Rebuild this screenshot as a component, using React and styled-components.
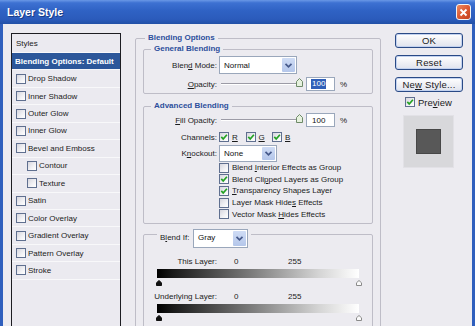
import React from "react";
import styled, { createGlobalStyle } from "styled-components";

const GlobalStyle = createGlobalStyle`
  html, body { margin: 0; padding: 0; background: #ECEBF0; }
  body { font-family: "Liberation Sans", Arial, sans-serif; color: #1b1b1b; }
`;

const styleItems = [
  { label: "Drop Shadow" },
  { label: "Inner Shadow" },
  { label: "Outer Glow" },
  { label: "Inner Glow" },
  { label: "Bevel and Emboss" },
  { label: "Contour", indent: true },
  { label: "Texture", indent: true },
  { label: "Satin" },
  { label: "Color Overlay" },
  { label: "Gradient Overlay" },
  { label: "Pattern Overlay" },
  { label: "Stroke" },
];

const advancedOptions = [
  { pre: "Blend ", key: "I", post: "nterior Effects as Group", checked: false },
  { pre: "Blend Cli", key: "p", post: "ped Layers as Group", checked: true },
  { pre: "", key: "T", post: "ransparency Shapes Layer", checked: true },
  { pre: "Layer Mask Hide", key: "s", post: " Effects", checked: false },
  { pre: "Vector Mask ", key: "H", post: "ides Effects", checked: false },
];

function CheckMark() {
  return (
    <svg width="8" height="8" viewBox="0 0 8 8">
      <polyline points="1.3,3.9 3.2,6 6.9,1.7" fill="none" stroke="#23A223" strokeWidth="1.7" />
    </svg>
  );
}

function Check({ checked }) {
  return <CheckBox>{checked && <CheckMark />}</CheckBox>;
}

function Chevron() {
  return (
    <svg width="9" height="7" viewBox="0 0 9 7">
      <polyline points="1.5,1.8 4.5,4.8 7.5,1.8" fill="none" stroke="#46598A" strokeWidth="1.7" />
    </svg>
  );
}

function Select({ value, width, height }) {
  return (
    <Combo $w={width} $h={height}>
      <ComboText>{value}</ComboText>
      <ComboArrow>
        <Chevron />
      </ComboArrow>
    </Combo>
  );
}

function Slider() {
  return (
    <SliderWrap>
      <Track />
      <Thumb>
        <svg width="7" height="9" viewBox="0 0 7 9">
          <path d="M0.5,8.5 L0.5,3.5 L3.5,0.5 L6.5,3.5 L6.5,8.5 Z" fill="#E6F1DE" stroke="#6E8A68" strokeWidth="1" />
        </svg>
      </Thumb>
    </SliderWrap>
  );
}

function RangeThumb({ dark }) {
  return (
    <svg width="6" height="6" viewBox="0 0 6 6">
      <path
        d="M0.5,5.5 L0.5,2.8 L3,0.5 L5.5,2.8 L5.5,5.5 Z"
        fill={dark ? "#111" : "#fafafa"}
        stroke={dark ? "#111" : "#8a8a8a"}
        strokeWidth="1"
      />
    </svg>
  );
}

function BlendRange({ label, mt }) {
  return (
    <>
      <ValueRow $mt={mt}>
        <Label>{label}</Label>
        <MinValue>0</MinValue>
        <span>255</span>
      </ValueRow>
      <GrayBar />
      <ThumbRow>
        <RangeThumb dark />
        <RangeThumb />
      </ThumbRow>
    </>
  );
}

export default function App() {
  return (
    <>
      <GlobalStyle />
      <Window>
        <TitleBar>
          <Title>Layer Style</Title>
          <CloseButton>
            <svg width="9" height="9" viewBox="0 0 9 9">
              <path d="M1.5,1.5 L7.5,7.5 M7.5,1.5 L1.5,7.5" stroke="#fff" strokeWidth="1.8" />
            </svg>
          </CloseButton>
        </TitleBar>

        <Frame>
          <StylesPanel>
            <PanelHeader>Styles</PanelHeader>
            <StyleRow $active>Blending Options: Default</StyleRow>
            {styleItems.map((item) => (
              <StyleRow key={item.label} $indent={item.indent}>
                <Check />
                <span>{item.label}</span>
              </StyleRow>
            ))}
          </StylesPanel>

          <Main>
            <Group $h={300}>
              <Legend $ml={2}>Blending Options</Legend>

              <Group $mt={1}>
                <Legend $ml={7}>General Blending</Legend>
                <FieldRow $h={18} $mt={2}>
                  <Label>
                    Blen<u>d</u> Mode:
                  </Label>
                  <Controls>
                    <Select value="Normal" width={78} height={18} />
                  </Controls>
                </FieldRow>
                <FieldRow $h={14} $mt={3}>
                  <Label>
                    <u>O</u>pacity:
                  </Label>
                  <Controls>
                    <Slider />
                    <NumberBox>
                      <Selected>100</Selected>
                    </NumberBox>
                    <Percent>%</Percent>
                  </Controls>
                </FieldRow>
                <Spacer $h={2} />
              </Group>

              <Group $mt={7}>
                <Legend $ml={7}>Advanced Blending</Legend>
                <FieldRow $h={14} $mt={2}>
                  <Label>
                    <u>F</u>ill Opacity:
                  </Label>
                  <Controls>
                    <Slider />
                    <NumberBox>100</NumberBox>
                    <Percent>%</Percent>
                  </Controls>
                </FieldRow>
                <FieldRow $h={10} $mt={5}>
                  <Label>Channels:</Label>
                  <Controls>
                    {["R", "G", "B"].map((c) => (
                      <Channel key={c}>
                        <Check checked />
                        <u>{c}</u>
                      </Channel>
                    ))}
                  </Controls>
                </FieldRow>
                <FieldRow $h={17} $mt={3}>
                  <Label>
                    K<u>n</u>ockout:
                  </Label>
                  <Controls>
                    <Select value="None" width={58} height={17} />
                  </Controls>
                </FieldRow>
                <CheckList>
                  {advancedOptions.map((o) => (
                    <CheckRow key={o.post}>
                      <Check checked={o.checked} />
                      <span>
                        {o.pre}
                        <u>{o.key}</u>
                        {o.post}
                      </span>
                    </CheckRow>
                  ))}
                </CheckList>
                <Spacer $h={3} />
              </Group>

              <Group $mt={5} $h={120}>
                <Legend $ml={13}>
                  <LegendInner>
                    <BlendIfLabel>
                      B<u>l</u>end If:
                    </BlendIfLabel>
                    <Select value="Gray" width={55} height={19} />
                  </LegendInner>
                </Legend>
                <BlendRange label="This Layer:" mt={16} />
                <BlendRange label="Underlying Layer:" mt={6} />
              </Group>
            </Group>
          </Main>

          <Side>
            <Button>OK</Button>
            <Button>Reset</Button>
            <Button>
              <span>
                Ne<u>w</u> Style...
              </span>
            </Button>
            <PreviewRow>
              <Check checked />
              <span>
                Pre<u>v</u>iew
              </span>
            </PreviewRow>
            <PreviewBox>
              <PreviewSwatch />
            </PreviewBox>
          </Side>
        </Frame>
      </Window>
    </>
  );
}

const Window = styled.div`
  width: 475px;
  height: 326px;
  overflow: hidden;
  background: #ecebf0;
`;

const TitleBar = styled.div`
  height: 24px;
  box-sizing: border-box;
  display: flex;
  align-items: center;
  justify-content: space-between;
  padding: 0 4px 0 7px;
  background: linear-gradient(
    #6a98e6 0%,
    #3d71d2 12%,
    #2f62c4 45%,
    #2b5bbb 80%,
    #2150a6 100%
  );
`;

const Title = styled.span`
  color: #fff;
  font-weight: bold;
  font-size: 10.5px;
  text-shadow: 1px 1px 0 #1a3d86;
`;

const CloseButton = styled.div`
  width: 15px;
  height: 16px;
  box-sizing: border-box;
  border: 1px solid #f4f4f4;
  border-radius: 3px;
  background: linear-gradient(135deg, #ec8a62 0%, #dc5a33 50%, #c4401d 100%);
  display: flex;
  align-items: center;
  justify-content: center;
`;

const Frame = styled.div`
  height: 302px;
  box-sizing: border-box;
  display: flex;
  align-items: flex-start;
  padding: 9px 0 0 8px;
  border-left: 3px solid #2f5fbd;
  border-right: 3px solid #2f5fbd;
  font-size: 8px;
`;

const StylesPanel = styled.div`
  flex: none;
  width: 110px;
  height: 320px;
  box-sizing: border-box;
  border: 1px solid #1d1d22;
  border-bottom: none;
  background: #ebeaf0;
`;

const PanelHeader = styled.div`
  height: 19px;
  box-sizing: border-box;
  border-bottom: 1px solid #f8f8fa;
  padding-left: 4px;
  display: flex;
  align-items: center;
`;

const StyleRow = styled.div`
  height: 17.45px;
  box-sizing: border-box;
  display: flex;
  align-items: center;
  gap: 2px;
  white-space: nowrap;
  border-bottom: 1px solid #f8f8fa;
  padding-left: ${(p) => (p.$active ? 3 : p.$indent ? 15 : 4)}px;
  background: ${(p) => (p.$active ? "#2c579a" : "transparent")};
  color: ${(p) => (p.$active ? "#fff" : "#1b1b1b")};
  font-weight: ${(p) => (p.$active ? "bold" : "normal")};
`;

const CheckBox = styled.span`
  flex: none;
  width: 10px;
  height: 10px;
  box-sizing: border-box;
  border: 1px solid #5f6f8f;
  background: linear-gradient(135deg, #d6d6de 0%, #f2f2f5 60%, #ffffff 100%);
  display: inline-flex;
  align-items: center;
  justify-content: center;
`;

const Main = styled.div`
  flex: none;
  width: 246px;
  margin-left: 14px;
`;

const Group = styled.fieldset`
  margin: ${(p) => p.$mt || 0}px 0 0;
  padding: ${(p) => (p.$h === 300 ? "0 7px" : "0")};
  border: 1px solid #bebdc7;
  border-radius: 2px;
  min-width: 0;
  box-sizing: border-box;
  ${(p) => (p.$h ? `height: ${p.$h}px;` : "")}
`;

const Legend = styled.legend`
  padding: 0 3px;
  margin-left: ${(p) => p.$ml}px;
  font-weight: bold;
  font-size: 8px;
  line-height: 10px;
  color: #2c4f9c;
`;

const LegendInner = styled.div`
  display: flex;
  align-items: center;
  height: 19px;
  margin-bottom: -7px;
  margin-top: 0;
  font-weight: normal;
  color: #1b1b1b;
`;

const BlendIfLabel = styled.span`
  width: 33px;
`;

const FieldRow = styled.div`
  display: grid;
  grid-template-columns: 73px auto;
  column-gap: 2px;
  align-items: center;
  height: ${(p) => p.$h}px;
  margin-top: ${(p) => p.$mt}px;
`;

const Label = styled.span`
  text-align: right;
  white-space: nowrap;
`;

const Controls = styled.div`
  display: flex;
  align-items: center;
  height: 100%;
`;

const Combo = styled.div`
  width: ${(p) => p.$w}px;
  height: ${(p) => p.$h}px;
  box-sizing: border-box;
  border: 1px solid #9aa7bb;
  background: #fff;
  display: flex;
  align-items: stretch;
  font-size: 8px;
`;

const ComboText = styled.span`
  flex: 1;
  display: flex;
  align-items: center;
  padding-left: 4px;
  color: #111;
`;

const ComboArrow = styled.span`
  width: 13px;
  margin: 1px;
  border-radius: 1px;
  background: linear-gradient(#cfdcf5, #b4c6ea);
  display: flex;
  align-items: center;
  justify-content: center;
`;

const SliderWrap = styled.div`
  position: relative;
  width: 84px;
  height: 14px;
  display: flex;
  align-items: center;
`;

const Track = styled.div`
  flex: 1;
  margin: 0 3px 0 2px;
  height: 0;
  border-top: 1px solid #9c9ba6;
  border-bottom: 1px solid #ffffff;
`;

const Thumb = styled.div`
  position: absolute;
  right: 0;
  top: 1px;
  width: 7px;
  height: 9px;
  display: flex;
`;

const NumberBox = styled.div`
  width: 29px;
  height: 14px;
  box-sizing: border-box;
  margin-left: 3px;
  border: 1px solid #9aa7bb;
  background: #fff;
  padding-left: 5px;
  display: flex;
  align-items: center;
  color: #111;
`;

const Selected = styled.span`
  background: #2f5fb8;
  color: #fff;
  padding: 0 1px;
  margin-left: -1px;
  line-height: 10px;
`;

const Percent = styled.span`
  margin-left: 5px;
`;

const Channel = styled.span`
  display: flex;
  align-items: center;
  gap: 3px;
  width: 26.5px;
`;

const CheckList = styled.div`
  margin-left: 75px;
`;

const CheckRow = styled.div`
  height: 11.6px;
  display: flex;
  align-items: center;
  gap: 3px;
  white-space: nowrap;
`;

const Spacer = styled.div`
  height: ${(p) => p.$h}px;
`;

const ValueRow = styled.div`
  display: grid;
  grid-template-columns: 73px 71px auto;
  align-items: center;
  height: 10px;
  margin-top: ${(p) => p.$mt}px;
`;

const MinValue = styled.span`
  padding-left: 17px;
`;

const GrayBar = styled.div`
  height: 9px;
  margin: 2px 13px 0;
  background: linear-gradient(90deg, #000 0%, #1a1a1a 8%, #777 45%, #d4d4d4 80%, #fff 100%);
`;

const ThumbRow = styled.div`
  height: 6px;
  margin: 2px 10px 0 12px;
  display: flex;
  justify-content: space-between;
`;

const Side = styled.div`
  flex: none;
  width: 68px;
  margin-left: 14px;
  display: flex;
  flex-direction: column;
`;

const Button = styled.div`
  height: 15px;
  box-sizing: border-box;
  margin-bottom: 7px;
  border: 1px solid #2a4a86;
  border-radius: 3px;
  background: linear-gradient(#ffffff 0%, #f1f2f6 45%, #dfe3ee 100%);
  box-shadow: inset 0 0 0 1px #c3d2ef;
  display: flex;
  align-items: center;
  justify-content: center;
  font-size: 9.5px;
  color: #1b1b1b;
  letter-spacing: 0.2px;
  white-space: pre;
`;

const PreviewRow = styled.div`
  margin-top: -2px;
  height: 10px;
  padding-left: 10px;
  display: flex;
  align-items: center;
  gap: 3px;
  font-size: 9.5px;
`;

const PreviewBox = styled.div`
  margin: 8px 0 0 8px;
  width: 51px;
  height: 53px;
  box-sizing: border-box;
  border: 1px solid #e2e1e6;
  background: #d8d8db;
  display: flex;
  align-items: center;
  justify-content: center;
`;

const PreviewSwatch = styled.div`
  width: 25px;
  height: 25px;
  box-sizing: border-box;
  border: 1px solid #474747;
  background: #585858;
`;
